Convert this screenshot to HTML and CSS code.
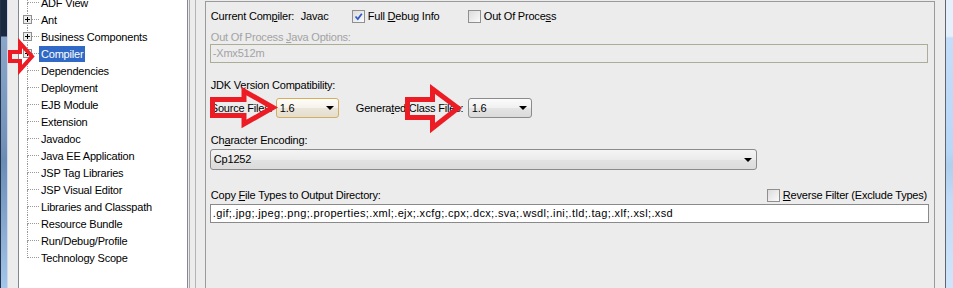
FILE: index.html
```html
<!DOCTYPE html>
<html lang="en">
<head>
<meta charset="UTF-8">
<title>Project Properties - Compiler</title>
<link rel="stylesheet" href="styles.css">
</head>
<body>
  <div class="frame"></div>
  <div class="gutter"></div>

  <!-- category tree -->
  <div class="tree">
    <div class="tree-list">
      <div class="node"><span class="twig"></span><span class="name">ADF View</span></div>
      <div class="node"><span class="twig"><svg class="plus" width="9" height="9"><rect x=".5" y=".5" width="8" height="8" fill="#ececec" stroke="#8e8f8f"/><path d="M2 4.5h5M4.5 2v5" stroke="#000"/></svg></span><span class="name">Ant</span></div>
      <div class="node"><span class="twig"><svg class="plus" width="9" height="9"><rect x=".5" y=".5" width="8" height="8" fill="#ececec" stroke="#8e8f8f"/><path d="M2 4.5h5M4.5 2v5" stroke="#000"/></svg></span><span class="name">Business Components</span></div>
      <div class="node"><span class="twig"><svg class="plus" width="9" height="9"><rect x=".5" y=".5" width="8" height="8" fill="#ececec" stroke="#8e8f8f"/><path d="M2 4.5h5M4.5 2v5" stroke="#000"/></svg></span><span class="name sel">Compiler</span></div>
      <div class="node"><span class="twig"></span><span class="name">Dependencies</span></div>
      <div class="node"><span class="twig"></span><span class="name">Deployment</span></div>
      <div class="node"><span class="twig"></span><span class="name">EJB Module</span></div>
      <div class="node"><span class="twig"></span><span class="name">Extension</span></div>
      <div class="node"><span class="twig"></span><span class="name">Javadoc</span></div>
      <div class="node"><span class="twig"></span><span class="name">Java EE Application</span></div>
      <div class="node"><span class="twig"></span><span class="name">JSP Tag Libraries</span></div>
      <div class="node"><span class="twig"></span><span class="name">JSP Visual Editor</span></div>
      <div class="node"><span class="twig"></span><span class="name">Libraries and Classpath</span></div>
      <div class="node"><span class="twig"></span><span class="name">Resource Bundle</span></div>
      <div class="node"><span class="twig"></span><span class="name">Run/Debug/Profile</span></div>
      <div class="node last"><span class="twig"></span><span class="name">Technology Scope</span></div>
    </div>
  </div>

  <div class="split"></div>

  <!-- compiler settings -->
  <div class="panel">
    <div class="row top-row">
      <span class="lbl">Current Com<u>p</u>iler:</span>
      <span class="val">Javac</span>
      <span class="check c1"><span class="box"><svg width="11" height="11"><path d="M2.5 5.5 L4.8 8 L8.8 2.8" fill="none" stroke="#2f5cc7" stroke-width="1.8"/></svg></span><span>Full <u>D</u>ebug Info</span></span>
      <span class="check"><span class="box"></span><span>Out Of Proce<u>s</u>s</span></span>
    </div>

    <div class="cap off-text cap-opts">Out Of Process <u>J</u>ava Options:</div>
    <div class="field off">-Xmx512m</div>

    <div class="cap cap-jdk">JDK Version Compatibility:</div>
    <div class="row jdk-row">
      <span class="lbl-src"><u>S</u>ource Files:</span>
      <div class="combo focus small"><span>1.6</span></div>
      <span class="lbl-gen">Genera<u>t</u>ed Class Files:</span>
      <div class="combo small gen"><span>1.6</span></div>
    </div>

    <div class="cap cap-enc">Ch<u>a</u>racter Encoding:</div>
    <div class="combo wide"><span>Cp1252</span></div>

    <div class="row copy-row">
      <span class="lbl">Copy <u>F</u>ile Types to Output Directory:</span>
      <span class="check"><span class="box"></span><span><u>R</u>everse Filter (Exclude Types)</span></span>
    </div>
    <div class="field path">.gif;.jpg;.jpeg;.png;.properties;.xml;.ejx;.xcfg;.cpx;.dcx;.sva;.wsdl;.ini;.tld;.tag;.xlf;.xsl;.xsd</div>
  </div>

  <div class="edge"></div>
  <div class="sb-line"></div>
  <div class="sb"></div>

  <!-- red callout arrows drawn over the screenshot -->
  <svg class="marks" width="953" height="288">
    <g fill="none" stroke="#ed1c24" stroke-linejoin="miter" stroke-miterlimit="10">
      <polygon stroke-width="4" points="10,52 20,52 20,43 32,56.5 20,70 20,61 10,61"/>
      <polygon stroke-width="5" points="212.5,99.5 244,99.5 244,91 273,107.5 244,124 244,115.5 212.5,115.5"/>
      <polygon stroke-width="5" points="407.5,99.5 432.5,99.5 432.5,89 458,108 432.5,128 432.5,117.5 407.5,117.5"/>
    </g>
  </svg>
</body>
</html>
```

FILE: styles.css
```css
body {
  margin: 0;
  width: 953px;
  height: 288px;
  overflow: hidden;
  display: flex;
  background: #ececec;
  font-family: "Liberation Sans", Arial, sans-serif;
  font-size: 11px;
  letter-spacing: -0.2px;
  color: #000;
}
u { text-decoration: underline; text-underline-offset: 1px; }

/* window frame on the left */
.frame {
  width: 7px;
  border-left: 1px solid #24324a;
  background: linear-gradient(to bottom, #1b2a3f 0, #1b2a3f 36px, #8aa6c8 37px, #7393bb 140px, #6a8bb4 160px, #a3c6ec 288px);
  box-shadow: inset -1px 0 #cfd9e6;
}
.gutter { width: 10px; }

/* tree */
.tree {
  width: 168px;
  background: #fff;
  border-left: 1px solid #828790;
  border-right: 1px solid #828790;
}
.tree-list {
  margin-top: -6px;
  padding-left: 8px;
}
.node {
  display: flex;
  align-items: center;
  height: 17px;
}
.twig {
  position: relative;
  width: 12px;
  height: 17px;
  display: flex;
  flex-direction: column;
  flex-shrink: 0;
}
.twig::before {
  content: "";
  height: 9px;
  box-sizing: border-box;
  border-left: 1px dotted #9a9a9a;
  border-bottom: 1px dotted #9a9a9a;
}
.twig::after {
  content: "";
  flex: 1;
  border-left: 1px dotted #9a9a9a;
}
.node.last .twig::after { border-left: none; }
.plus {
  position: absolute;
  left: -4px;
  top: 4px;
}
.name {
  padding: 0 2px;
  line-height: 16px;
  white-space: nowrap;
}
.name.sel {
  background: #3169c6;
  color: #fff;
}

/* splitter */
.split {
  width: 17px;
  background: linear-gradient(to right, #ececec 1px, #a7a7a7 1px, #a7a7a7 2px, #ececec 2px, #ececec 7px, #b4b4b4 7px, #b4b4b4 8px, #ececec 8px);
}

/* settings panel */
.panel {
  width: 731px;
  box-sizing: border-box;
  margin-top: 1px;
  border: 1px solid #9a9a9a;
  border-bottom: none;
  padding: 8px 5px 0 4px;
  line-height: 13px;
}
.row {
  display: flex;
  align-items: center;
  white-space: nowrap;
}
.top-row { height: 13px; }
.lbl { padding-left: 1px; }
.top-row .lbl { width: 90px; }
.val { width: 51px; }
.check {
  display: flex;
  align-items: center;
}
.check.c1 { width: 116px; }
.box {
  width: 13px;
  height: 13px;
  box-sizing: border-box;
  border: 1px solid #8f8f8f;
  background: linear-gradient(135deg, #dcdcdc, #fafafa);
  margin-right: 3px;
  flex-shrink: 0;
}
.box svg { display: block; }

.cap { padding-left: 1px; }
.off-text { color: #a3a3a3; }
.cap-opts { margin-top: 8px; }
.cap-jdk { margin-top: 16px; }
.cap-enc { margin-top: 16px; }

.field {
  height: 19px;
  box-sizing: border-box;
  border: 1px solid #8a8a8a;
  background: #fff;
  padding-left: 2px;
  line-height: 17px;
  white-space: nowrap;
  overflow: hidden;
}
.field.off {
  border-color: #abad97;
  background: transparent;
  color: #a3a3a3;
  margin-right: 1px;
}
.field.path { letter-spacing: 0.35px; }

.jdk-row { margin-top: 6px; height: 20px; }
.lbl-src { width: 66px; padding-left: 1px; box-sizing: border-box; }
.lbl-gen { width: 112px; margin-left: 17px; }

.combo {
  display: flex;
  align-items: center;
  height: 20px;
  box-sizing: border-box;
  border: 1px solid #8b8b8b;
  border-radius: 3px;
  background: linear-gradient(#fbfbfb, #f0f0f0 50%, #e4e4e4 51%, #dadada);
  padding-left: 3px;
}
.combo::after {
  content: "";
  margin-left: auto;
  margin-right: 4px;
  border-left: 4px solid transparent;
  border-right: 4px solid transparent;
  border-top: 4px solid #000;
}
.combo.small { width: 63px; }
.combo.gen { width: 64px; }
.combo.focus {
  border-color: #d7ad5d;
  background: linear-gradient(#fefdf9, #f5f2ea 50%, #ebe6da 51%, #e4ded0);
}
.combo.wide {
  width: 547px;
  margin-top: 2px;
  height: 21px;
  background: linear-gradient(#f4f4f4, #ebebeb 50%, #e2e2e2 51%, #dbdbdb);
}

.copy-row {
  margin-top: 19px;
  height: 13px;
  justify-content: space-between;
  padding-right: 2px;
}
.copy-row + .field { margin-top: 2px; }

/* right side */
.edge { width: 10px; }
.sb-line { width: 1px; background: #5f6670; }
.sb {
  width: 7px;
  background: linear-gradient(to bottom, #e4f1fd 0, #e4f1fd 36px, #c2defa 38px, #b8d8f8 150px, #aecfee 165px, #c0dcf8 200px, #cfe5fb 288px);
}

/* annotation overlay */
.marks {
  position: absolute;
  left: 0;
  top: 0;
  pointer-events: none;
}
```
